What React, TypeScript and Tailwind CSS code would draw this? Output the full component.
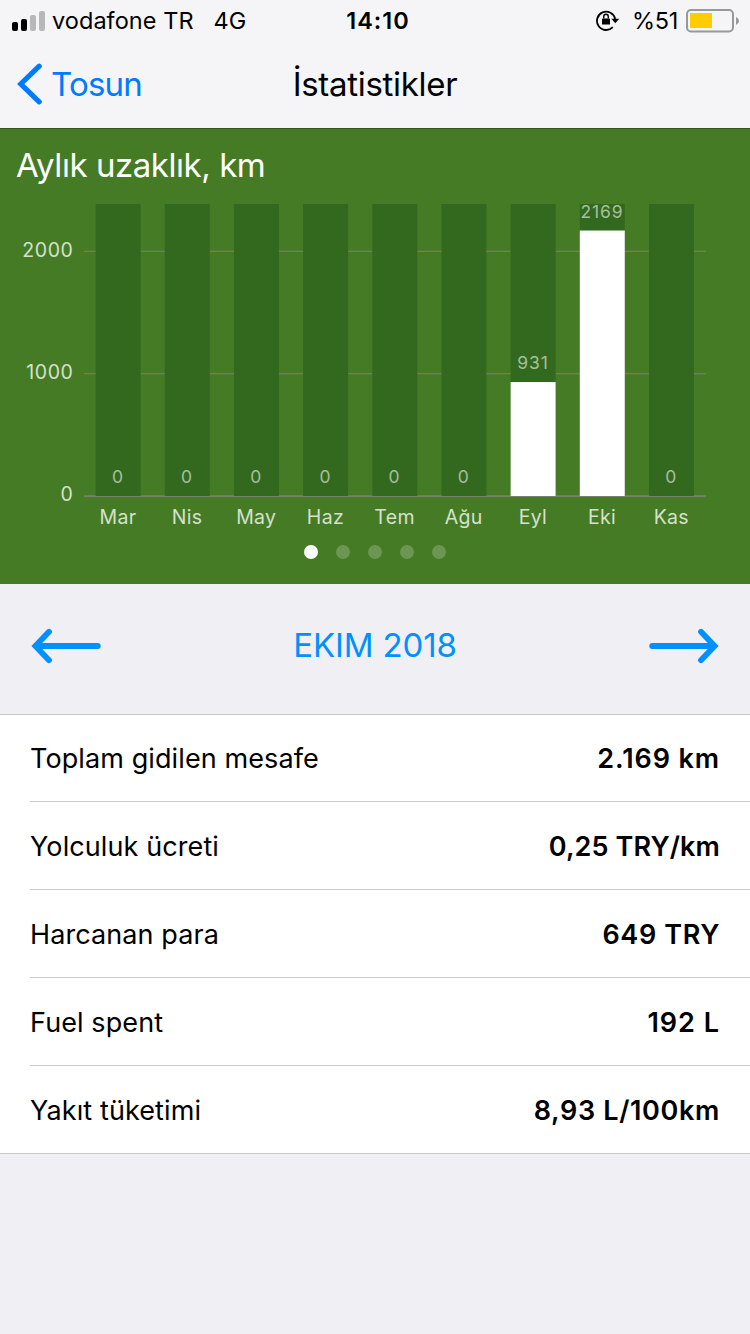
import clsx from "clsx";

interface MonthDistance {
  month: string;
  km: number;
}

interface Stat {
  label: string;
  value: string;
  valueClass: string;
}

const distances: MonthDistance[] = [
  { month: "Mar", km: 0 },
  { month: "Nis", km: 0 },
  { month: "May", km: 0 },
  { month: "Haz", km: 0 },
  { month: "Tem", km: 0 },
  { month: "Ağu", km: 0 },
  { month: "Eyl", km: 931 },
  { month: "Eki", km: 2169 },
  { month: "Kas", km: 0 },
];

const stats: Stat[] = [
  { label: "Toplam gidilen mesafe", value: "2.169 km", valueClass: "tracking-[0.9px]" },
  { label: "Yolculuk ücreti", value: "0,25 TRY/km", valueClass: "tracking-[0.1px]" },
  { label: "Harcanan para", value: "649 TRY", valueClass: "tracking-[0.6px]" },
  { label: "Fuel spent", value: "192 L", valueClass: "tracking-[1px]" },
  { label: "Yakıt tüketimi", value: "8,93 L/100km", valueClass: "tracking-[0.65px]" },
];

// Chart geometry, in px
const BASE = 302;
const TOP = 10;
const PX_PER_KM = 0.1224;
const FIRST_BAR = 95.6;
const BAR_STEP = 69.17;
const BAR_WIDTH = 45;

function StatusBar() {
  return (
    <div className="grid h-10 grid-cols-[1fr_auto_1fr] items-center pt-px text-[23.5px] leading-none">
      <div className="flex items-center pl-3">
        <svg width="33" height="20" viewBox="0 0 33 20" className="mr-[7px]">
          <rect x="0" y="11" width="6" height="9" rx="2" />
          <rect x="9" y="8" width="6" height="12" rx="2" />
          <rect x="18" y="4" width="6" height="16" rx="2" fill="#b8b8ba" />
          <rect x="27" y="0" width="6" height="20" rx="2" fill="#b8b8ba" />
        </svg>
        <span className="tracking-[0.05px]">vodafone TR</span>
        <span className="ml-5">4G</span>
      </div>
      <span className="pl-[6px] font-semibold tracking-[1px]">14:10</span>
      <div className="flex items-center justify-end pr-[11px]">
        <svg width="24" height="22" viewBox="0 0 24 22" fill="none" className="mr-[12px] mb-0.5">
          <path d="M16.8 18.2A9.2 9.2 0 1 1 19.2 10" stroke="#000" strokeWidth="1.8" />
          <path d="M15.4 9.8h7.8l-3.9 4.4z" fill="#000" />
          <rect x="6" y="9.4" width="8" height="6.2" rx="0.6" fill="#000" />
          <path d="M7.7 9.6V7.6a2.3 2.3 0 0 1 4.6 0v2" stroke="#000" strokeWidth="1.4" />
        </svg>
        <span className="tracking-[-0.3px]">%51</span>
        <svg width="53" height="24" viewBox="0 0 53 24" fill="none" className="ml-2">
          <rect x="1" y="1" width="46" height="21.4" rx="4" stroke="#98989b" strokeWidth="2" />
          <rect x="4" y="4" width="22" height="15" fill="#ffcc00" />
          <path d="M50 8q3 1.5 3 4t-3 4z" fill="#98989b" />
        </svg>
      </div>
    </div>
  );
}

function NavBar() {
  return (
    <div className="grid h-[88px] grid-cols-[1fr_auto_1fr] items-center text-[33px] leading-none">
      <button className="flex items-center pl-[17px] text-[#007aff]">
        <svg width="26" height="42" viewBox="0 0 26 42" fill="none" className="mr-[8px]">
          <path
            d="M22.2 3.2 3.8 21l18.4 17.8"
            stroke="currentColor"
            strokeWidth="5.2"
            strokeLinecap="round"
          />
        </svg>
        <span className="tracking-[-0.8px]">Tosun</span>
      </button>
      <h1 className="tracking-[-0.3px]">İstatistikler</h1>
    </div>
  );
}

function DistanceChart() {
  return (
    <svg width="750" height="336" viewBox="0 0 750 336" className="block">
      {[0, 1000, 2000].map((km) => (
        <g key={km}>
          <rect
            x="84"
            y={BASE - km * PX_PER_KM - (km ? 0.5 : 0.8)}
            width="622"
            height={km ? 1.2 : 2}
            fill="#757f6c"
          />
          <text
            x="73.5"
            y={BASE - km * PX_PER_KM + 5.3}
            textAnchor="end"
            fill="#d5e1cd"
            className="text-[19.5px] tracking-[0.6px]"
          >
            {km}
          </text>
        </g>
      ))}
      {distances.map(({ month, km }, i) => {
        const x = FIRST_BAR + i * BAR_STEP;
        const y = BASE - km * PX_PER_KM;
        return (
          <g key={month} textAnchor="middle">
            <rect x={x} y={TOP} width={BAR_WIDTH} height={BASE - TOP} fill="#33691e" />
            {km > 0 && <rect x={x} y={y} width={BAR_WIDTH} height={BASE - y} fill="#fff" />}
            <text x={x + 22.3} y={y - 12.6} fill="#a6bf9c" className="text-[17.5px] tracking-[0.9px]">
              {km}
            </text>
            <text x={x + 22.3} y="330" fill="#d5e1cd" className="text-[19.5px] tracking-[0.3px]">
              {month}
            </text>
          </g>
        );
      })}
    </svg>
  );
}

function ArrowLeft({ className }: { className?: string }) {
  return (
    <svg width="70" height="36" viewBox="0 0 70 36" fill="none" className={className}>
      <path
        d="M66.8 18H5M18 3.8 4.4 18 18 32.2"
        stroke="currentColor"
        strokeWidth="5.8"
        strokeLinecap="round"
      />
    </svg>
  );
}

export default function App() {
  return (
    <div className="h-[1334px] w-[750px] overflow-hidden bg-[#efeff4] font-['Inter',sans-serif] text-black">
      <header className="bg-[#f5f5f8]">
        <StatusBar />
        <NavBar />
      </header>

      <section className="h-[456px] border-t border-[#36541f] bg-[#457b25]">
        <h2 className="h-[65px] pt-[19px] pl-4 text-[33px] leading-[34px] tracking-[-0.45px] text-white">
          Aylık uzaklık, km
        </h2>
        <DistanceChart />
        <div className="mt-[15px] flex justify-center gap-[18px]">
          {[0, 1, 2, 3, 4].map((page) => (
            <span
              key={page}
              className={clsx("size-3.5 rounded-full", page === 0 ? "bg-white" : "bg-[#6c9751]")}
            />
          ))}
        </div>
      </section>

      <div className="flex h-[130px] items-center justify-between px-[31px] pb-[7px] text-[#0091ff]">
        <ArrowLeft />
        <span className="text-[33px] tracking-[-0.15px]">EKIM 2018</span>
        <ArrowLeft className="rotate-180" />
      </div>

      <section className="border-y border-[#c8c7cc] bg-white pl-[30px]">
        {stats.map((stat) => (
          <div
            key={stat.label}
            className="flex h-[88px] items-center justify-between border-b border-[#c8c7cc] pt-px pr-[30px] text-[27px] leading-none first:h-[87px] first:pt-0 last:h-[87px] last:border-b-0"
          >
            <span className="tracking-[0.1px]">{stat.label}</span>
            <span className={clsx("font-semibold", stat.valueClass)}>{stat.value}</span>
          </div>
        ))}
      </section>
    </div>
  );
}
